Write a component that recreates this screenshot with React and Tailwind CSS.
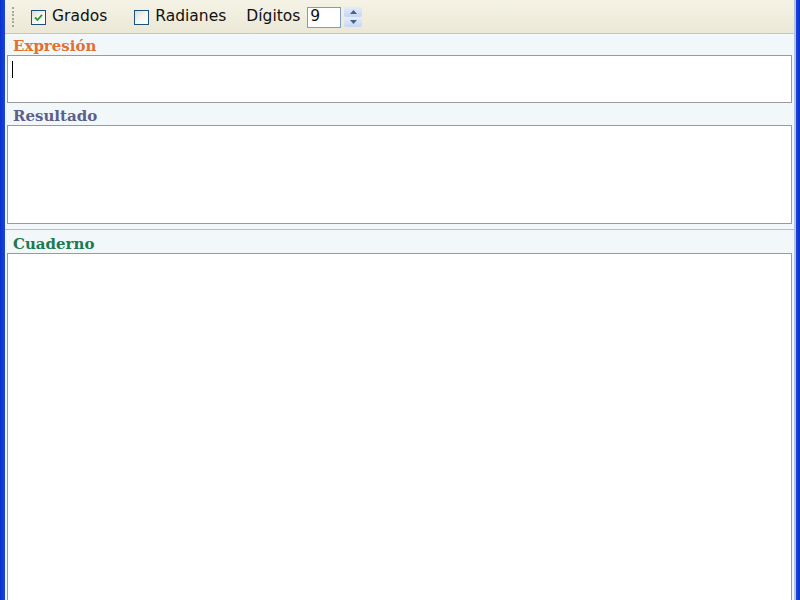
import React from 'react';

const Check = ({ checked }) => (
    <span className="w-[15px] h-[15px] border border-[#1c5180] bg-gradient-to-br from-[#dcdcd5] via-[#f6f6f3] to-white flex items-center justify-center">
        {checked && (
            <svg width="11" height="11" viewBox="0 0 11 11">
                <path d="M2 5.5 L4.5 8 L9 2.8" fill="none" stroke="#21a121" strokeWidth="1.8" />
            </svg>
        )}
    </span>
);

const Label = ({ color, h, children }) => (
    <div className={`${h} flex items-end pl-[6px] pb-[1px] font-bold text-[15px] leading-none ${color}`} style={{ fontFamily: '"DejaVu Serif", serif' }}>
        {children}
    </div>
);

const App = () => (
    <div className="w-[800px] h-[600px] flex bg-[#0a2fd0] overflow-hidden">
        <div className="w-[5px] bg-gradient-to-r from-[#0832c8] to-[#1a45e0]" />
        <div className="flex-1 flex flex-col bg-[#f2f7fa] border-r-2 border-[#b3c3dc]">
            <div className="h-[34px] pt-[1px] flex items-center bg-gradient-to-b from-[#f5f3e6] to-[#ebe8d6] border-b border-[#c9c7ba] text-[15.5px] text-[#111]" style={{ fontFamily: '"DejaVu Sans", sans-serif' }}>
                <div className="ml-[7px] w-[2px] h-[22px] flex flex-col justify-between py-[1px]">
                    {[0, 1, 2, 3, 4, 5].map(i => <span key={i} className="w-[2px] h-[2px] bg-[#a8a79b]" />)}
                </div>
                <div className="ml-[17px] flex items-center gap-[6px]">
                    <Check checked />
                    <span>Grados</span>
                </div>
                <div className="ml-[27px] flex items-center gap-[6px]">
                    <Check />
                    <span>Radianes</span>
                </div>
                <span className="ml-[20px]">Dígitos</span>
                <div className="ml-[7px] w-[34px] h-[21px] bg-white border border-[#7f9db9] flex items-center pl-[2px]">9</div>
                <div className="ml-[3px] w-[18px] h-[20px] flex flex-col gap-[1px]">
                    <div className="flex-1 bg-gradient-to-b from-[#e3ecfb] to-[#c5d5f5] rounded-[2px] flex items-center justify-center">
                        <svg width="7" height="4" viewBox="0 0 7 4"><path d="M0 4 L3.5 0 L7 4Z" fill="#4d6185" /></svg>
                    </div>
                    <div className="flex-1 bg-gradient-to-b from-[#e3ecfb] to-[#c5d5f5] rounded-[2px] flex items-center justify-center">
                        <svg width="7" height="4" viewBox="0 0 7 4"><path d="M0 0 L3.5 4 L7 0Z" fill="#4d6185" /></svg>
                    </div>
                </div>
            </div>
            <div className="px-[2px] flex flex-col flex-1">
                <Label h="h-[21px]" color="text-[#e0712f]">Expresión</Label>
                <div className="h-[48px] bg-white border border-[#9a9a9a] pl-[4px] pt-[5px]">
                    <span className="block w-[1px] h-[17px] bg-black" />
                </div>
                <Label h="h-[22px]" color="text-[#5b5f8a]">Resultado</Label>
                <div className="h-[99px] bg-white border border-[#9a9a9a]" />
                <div className="mt-[5px] h-[2px] border-t border-[#bcbcbc] -mx-[2px]" />
                <Label h="h-[22px]" color="text-[#1c7a52]">Cuaderno</Label>
                <div className="flex-1 bg-white border border-[#9a9a9a] border-b-0" />
            </div>
        </div>
        <div className="w-[4px] bg-gradient-to-r from-[#1a45e0] to-[#0832c8]" />
    </div>
);

export default App;
